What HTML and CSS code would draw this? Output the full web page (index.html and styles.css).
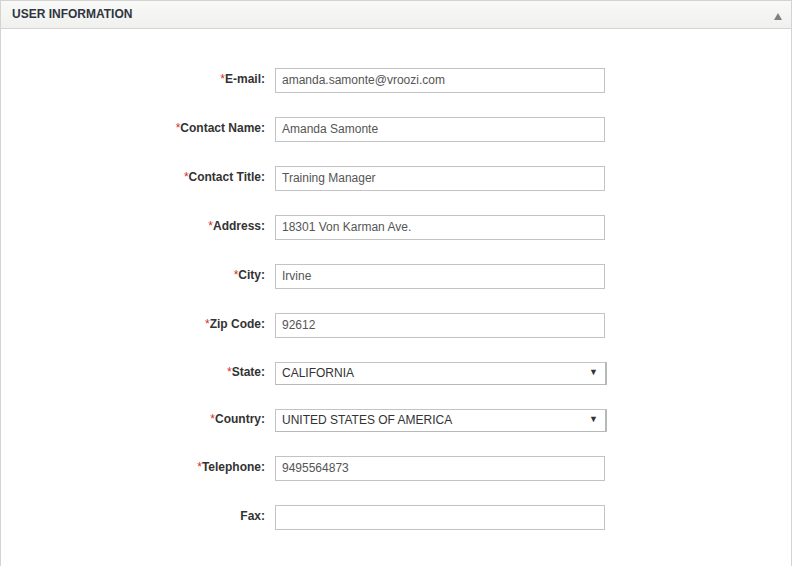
FILE: index.html
```html
<!DOCTYPE html>
<html>
<head>
  <meta charset="UTF-8" />
  <title>User Information</title>
  <link rel="stylesheet" href="styles.css">
</head>
<body>
  <div class="panel">
    <div class="panel-head">
      <span class="panel-title">USER INFORMATION</span>
      <svg class="toggle" width="8" height="7" viewBox="0 0 8 7"><polygon points="4,0 8,7 0,7" fill="#808080"/></svg>
    </div>
    <form class="panel-body">
      <label class="lbl"><span class="req">*</span>E-mail:</label>
      <input type="text" class="field" value="amanda.samonte@vroozi.com" />

      <label class="lbl"><span class="req">*</span>Contact Name:</label>
      <input type="text" class="field" value="Amanda Samonte" />

      <label class="lbl"><span class="req">*</span>Contact Title:</label>
      <input type="text" class="field" value="Training Manager" />

      <label class="lbl"><span class="req">*</span>Address:</label>
      <input type="text" class="field" value="18301 Von Karman Ave." />

      <label class="lbl"><span class="req">*</span>City:</label>
      <input type="text" class="field" value="Irvine" />

      <label class="lbl"><span class="req">*</span>Zip Code:</label>
      <input type="text" class="field" value="92612" />

      <label class="lbl"><span class="req">*</span>State:</label>
      <div class="select-wrap">
        <select class="field select">
          <option>CALIFORNIA</option>
        </select>
        <span class="caret">&#9660;</span>
      </div>

      <label class="lbl"><span class="req">*</span>Country:</label>
      <div class="select-wrap">
        <select class="field select">
          <option>UNITED STATES OF AMERICA</option>
        </select>
        <span class="caret">&#9660;</span>
      </div>

      <label class="lbl"><span class="req">*</span>Telephone:</label>
      <input type="text" class="field" value="9495564873" />

      <label class="lbl">Fax:</label>
      <input type="text" class="field" value="" />
    </form>
  </div>
</body>
</html>
```

FILE: styles.css
```css
body {
  margin: 0;
  font-family: "Liberation Sans", Arial, sans-serif;
  font-size: 12px;
  color: #333;
  background: #fff;
}
.panel {
  width: 790px;
  height: 565px;
  border: 1px solid #d3d3d3;
  border-bottom: 0;
}
.panel-head {
  height: 27px;
  display: flex;
  align-items: center;
  justify-content: space-between;
  padding: 0 9px 0 11px;
  background: linear-gradient(#f9f9f8, #f0f0ee);
  border-bottom: 1px solid #d3d3d3;
}
.panel-title {
  font-weight: bold;
  font-size: 12px;
  color: #2f3640;
  padding-bottom: 1px;
}
.toggle {
  display: block;
  margin-top: 3px;
}
.panel-body {
  display: grid;
  grid-template-columns: 274px 330px;
  row-gap: 24px;
  align-items: center;
  padding-top: 39px;
}
.lbl {
  text-align: right;
  padding-right: 10px;
  padding-bottom: 3px;
  font-weight: bold;
  color: #333;
}
.req {
  color: #d0312d;
  font-weight: normal;
}
.field {
  display: block;
  box-sizing: border-box;
  width: 330px;
  height: 25px;
  margin: 0;
  padding: 0 6px 1px;
  border: 1px solid #c3c3c3;
  font-family: "Liberation Sans", Arial, sans-serif;
  font-size: 12px;
  color: #555;
  background: #fff;
  outline: none;
}
.select-wrap {
  position: relative;
  width: 332px;
}
.select {
  width: 332px;
  height: 23px;
  appearance: none;
  -webkit-appearance: none;
  border-right: 2px solid #b8b8b8;
  border-bottom-color: #b8b8b8;
  color: #333;
  padding-left: 6px;
}
.caret {
  position: absolute;
  right: 9px;
  top: 5px;
  font-size: 9px;
  color: #333;
  pointer-events: none;
}
```
